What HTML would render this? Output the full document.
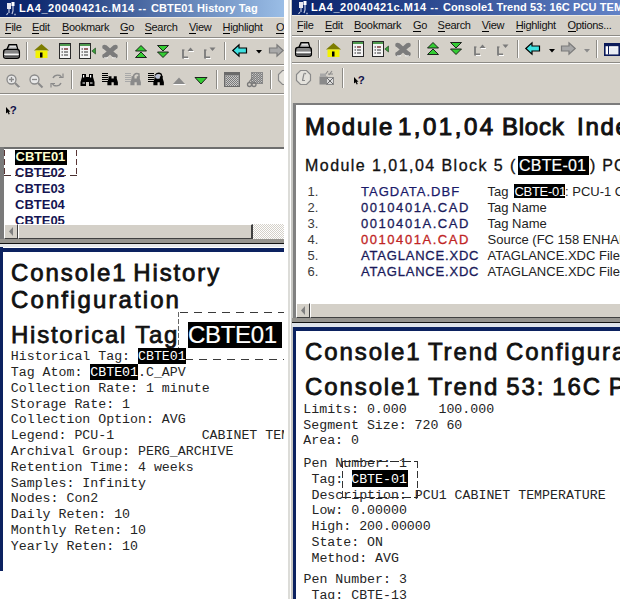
<!DOCTYPE html>
<html><head><meta charset="utf-8">
<style>
html,body{margin:0;padding:0;width:620px;height:605px;overflow:hidden;background:#fff;position:relative}
div,span,svg{position:absolute;box-sizing:border-box}
.s{font-family:"Liberation Sans",sans-serif}
.m{font-family:"Liberation Mono",monospace}
.g{background:#d4d0c8}
.tt{font-family:"Liberation Sans",sans-serif;font-size:11px;font-weight:bold;color:#fff;white-space:nowrap;line-height:12px}
.mn{font-family:"Liberation Sans",sans-serif;font-size:11px;color:#111;white-space:nowrap;line-height:12px;letter-spacing:-0.3px}
.mn u{text-decoration:none;border-bottom:1px solid #000}
.hl{background:#000;color:#fff}
.ml{font-family:"Liberation Mono",monospace;font-size:13.25px;color:#242424;white-space:pre;line-height:16px}
.lst{font-family:"Liberation Sans",sans-serif;font-size:13px;font-weight:bold;color:#141452;white-space:nowrap;line-height:16px}
.sub{font-family:"Liberation Sans",sans-serif;font-size:16px;line-height:18px;color:#111;white-space:nowrap;-webkit-text-stroke:0.3px #111}
.rw{font-family:"Liberation Sans",sans-serif;font-size:13px;line-height:15px;white-space:nowrap}
.h1{font-family:"Liberation Sans",sans-serif;font-size:24px;color:#111;white-space:nowrap;line-height:27px;-webkit-text-stroke:0.8px #111}
</style></head><body>
<svg style="left:0;top:0" width="0" height="0">
<defs>
<symbol id="prn" overflow="visible"><path d="M3.8 5.5 L6 0.7 H13.5 L14.8 5.5" fill="#9a9a9a" stroke="#000" stroke-width="1.3"/><path d="M6.8 2.4h6.2M6.2 4h7.6" stroke="#f4f4f4" stroke-width="0.9"/><path d="M3 5.4 H14 Q16.4 5.4 16.4 8 V12.3 Q16.4 14.4 14 14.4 H3 Q0.6 14.4 0.6 12.3 V8 Q0.6 5.4 3 5.4Z" fill="#858585" stroke="#000" stroke-width="1.3"/><path d="M1.2 10.3 H15.8" stroke="#f8f8f8" stroke-width="1.4"/><path d="M2 12.6 H15" stroke="#505050" stroke-width="1.2"/></symbol>
<symbol id="home" overflow="visible"><path d="M7.5 0 L15 6.5 H0 Z" fill="#7d7d00"/><rect x="1.5" y="6.5" width="12" height="7.5" fill="#f2f200"/><rect x="6" y="8.5" width="2.5" height="5" fill="#000"/></symbol>
<symbol id="cal" overflow="visible"><rect x="0.5" y="0.5" width="11" height="15" fill="#f4f4f4" stroke="#2a2a2a"/><rect x="1" y="1" width="10" height="2" fill="#4f9a4f"/><path d="M2.5 6h1.5M5 6h4M2.5 9h1.5M5 9h4M2.5 12h1.5M5 12h4" stroke="#333" stroke-width="1.2"/><path d="M5 6h4" stroke="#a04040" stroke-width="1"/></symbol>
<symbol id="calarr" overflow="visible"><use href="#cal"/><path d="M16.5 5 L12.8 8 L16.5 11Z" fill="#3aa03a" stroke="#1a401a" stroke-width="0.6"/></symbol>
<symbol id="xg" overflow="visible"><path d="M3 2 L13 11 M13 2 L3 11" stroke="#7c7c7c" stroke-width="4.5"/><circle cx="2.5" cy="2" r="2.3" fill="#7c7c7c"/><circle cx="13.5" cy="2" r="2.3" fill="#7c7c7c"/><circle cx="2.5" cy="11" r="2.3" fill="#7c7c7c"/><circle cx="13.5" cy="11" r="2.3" fill="#7c7c7c"/><path d="M2 12.8h4M10 12.8h4" stroke="#fff" stroke-width="0.8"/></symbol>
<symbol id="up2" overflow="visible"><path d="M6 0.5 L11.5 6 H0.5Z" fill="#33cc33" stroke="#111" stroke-width="0.9"/><path d="M6 7 L11.5 12.5 H0.5Z" fill="#33cc33" stroke="#111" stroke-width="0.9"/></symbol>
<symbol id="dn2" overflow="visible"><path d="M0.5 0.5 H11.5 L6 6Z" fill="#33cc33" stroke="#111" stroke-width="0.9"/><path d="M0.5 7 H11.5 L6 12.5Z" fill="#33cc33" stroke="#111" stroke-width="0.9"/></symbol>
<symbol id="lup" overflow="visible"><path d="M2 3 V10.5 H7" stroke="#7a7a7a" stroke-width="1.8" fill="none"/><path d="M1 3h2.5" stroke="#7a7a7a" stroke-width="1.2"/><path d="M6.5 4 L9.5 0.5 L12.5 4Z" fill="#7a7a7a"/><path d="M3 11.5h5M8 4.5h5" stroke="#fff" stroke-width="1"/></symbol>
<symbol id="ldn" overflow="visible"><path d="M2 3 V10.5 H7" stroke="#7a7a7a" stroke-width="1.8" fill="none"/><path d="M1 3h2.5" stroke="#7a7a7a" stroke-width="1.2"/><path d="M6.5 0.5 H12.5 L9.5 4Z" fill="#7a7a7a"/><path d="M3 11.5h5" stroke="#fff" stroke-width="1"/></symbol>
<symbol id="arrl" overflow="visible"><path d="M0.8 6.5 L7 0.8 V4 H14.5 V9 H7 V12.2Z" fill="#3fe0e0" stroke="#000" stroke-width="1.2"/></symbol>
<symbol id="arrr" overflow="visible"><path d="M14.2 6.5 L8 0.8 V4 H0.5 V9 H8 V12.2Z" fill="#a8a8a8" stroke="#7a7a7a" stroke-width="1.2"/></symbol>
<symbol id="dtri" overflow="visible"><path d="M0 0h6L3 3.5Z" fill="#000"/></symbol>
<symbol id="dtrig" overflow="visible"><path d="M0 0h6L3 3.5Z" fill="#8a8a8a"/></symbol>
<symbol id="zin" overflow="visible"><circle cx="5.5" cy="5.5" r="4.5" fill="#e8e8e8" stroke="#8a8a8a" stroke-width="1.3"/><path d="M3 5.5h5M5.5 3v5" stroke="#8a8a8a" stroke-width="1.3"/><path d="M9 9 L13.5 13.5" stroke="#8a8a8a" stroke-width="2"/><path d="M12.5 14 L14 14" stroke="#fff"/></symbol>
<symbol id="zout" overflow="visible"><circle cx="5.5" cy="5.5" r="4.5" fill="#e8e8e8" stroke="#8a8a8a" stroke-width="1.3"/><path d="M3 5.5h5" stroke="#8a8a8a" stroke-width="1.3"/><path d="M9 9 L13.5 13.5" stroke="#8a8a8a" stroke-width="2"/></symbol>
<symbol id="refr" overflow="visible"><path d="M2 4 Q4 0 9 1.5 L10.5 3" fill="none" stroke="#8a8a8a" stroke-width="1.4"/><path d="M8 3.5h4v-4" fill="none" stroke="#8a8a8a" stroke-width="1.2"/><path d="M10 9 Q8 13 3 11.5 L1.5 10" fill="none" stroke="#8a8a8a" stroke-width="1.4"/><path d="M4 9.5H0v4" fill="none" stroke="#8a8a8a" stroke-width="1.2"/></symbol>
<symbol id="bino" overflow="visible"><path d="M2 1h4v3h3V1h4v3l1.5 5v4H9V9H6v4H0.5V9L2 4z" fill="#000"/><path d="M2.5 10h2.5M10 10h2.5" stroke="#fff" stroke-width="1"/><rect x="3" y="2" width="1.2" height="2.5" fill="#fff"/><rect x="10" y="2" width="1.2" height="2.5" fill="#fff"/></symbol>
<symbol id="bino2" overflow="visible"><path d="M0 1.5h6M0 3.5h6M0 5.5h6M0 7.5h6M0 9.5h6" stroke="#000" stroke-width="1"/><g transform="translate(5,3.5) scale(0.75)"><path d="M2 1h4v3h3V1h4v3l1.5 5v4H9V9H6v4H0.5V9L2 4z" fill="#000"/></g></symbol>
<symbol id="bino3" overflow="visible"><path d="M0 1.5h6M0 3.5h6M0 5.5h6M0 7.5h6M0 9.5h6" stroke="#a8a8a8" stroke-width="1"/><g transform="translate(5,3.5) scale(0.75)"><path d="M2 1h4v3h3V1h4v3l1.5 5v4H9V9H6v4H0.5V9L2 4z" fill="#8a8a8a"/></g><path d="M8 5 Q10 0 14 2 L14 5.5" fill="none" stroke="#8a8a8a" stroke-width="1.4"/></symbol>
<symbol id="bino4" overflow="visible"><path d="M0 1.5h6M0 3.5h6M0 5.5h6M0 7.5h6M0 9.5h6" stroke="#000" stroke-width="1"/><g transform="translate(5,3.5) scale(0.75)"><path d="M2 1h4v3h3V1h4v3l1.5 5v4H9V9H6v4H0.5V9L2 4z" fill="#000"/></g><path d="M7 3.5 Q10 0 13 2 L14 5" fill="none" stroke="#000" stroke-width="1.4"/><circle cx="9.5" cy="4.5" r="2.3" fill="#b8c0d8"/></symbol>
<symbol id="trug" overflow="visible"><path d="M0 7 L6 0.5 L12 7Z" fill="#8a8a8a"/><path d="M0.5 7.5h12" stroke="#fff"/></symbol>
<symbol id="trdg" overflow="visible"><path d="M0 0.5 H12 L6 7Z" fill="#33cc33" stroke="#111" stroke-width="0.9"/></symbol>
<symbol id="grid" overflow="visible"><rect x="0.5" y="0.5" width="15" height="14" fill="#9a9a9a" stroke="#6a6a6a"/><rect x="1" y="1" width="14" height="2" fill="#6a6a6a"/><rect x="2" y="4" width="12" height="10" fill="url(#chk)"/></symbol>
<symbol id="gridp" overflow="visible"><rect x="4.5" y="0.5" width="11" height="11" fill="url(#chk)" stroke="#8a8a8a"/><path d="M7 1v10M10 1v10M13 1v10" stroke="#8a8a8a"/><circle cx="2.5" cy="12.5" r="2" fill="none" stroke="#7a7a7a" stroke-width="1.3"/><circle cx="7" cy="12.5" r="2" fill="none" stroke="#7a7a7a" stroke-width="1.3"/><path d="M2 10 L6 5" stroke="#7a7a7a" stroke-width="1.2"/></symbol>
<pattern id="chk" width="2" height="2" patternUnits="userSpaceOnUse"><rect width="2" height="2" fill="#c8c8c8"/><rect width="1" height="1" fill="#7a7a7a"/><rect x="1" y="1" width="1" height="1" fill="#7a7a7a"/></pattern>
<symbol id="khelp" overflow="visible"><path d="M2 4 V10.5 L3.5 9.2 L4.7 11.5 L5.8 10.9 L4.7 8.7 H6.5Z" fill="#000"/><text x="5.8" y="10.5" font-family="Liberation Sans" font-weight="bold" font-size="11.5" fill="#10104a">?</text></symbol>
<symbol id="clock" overflow="visible"><path d="M4.5 0.5h6l4 4v6l-4 4h-6l-4-4v-6z" fill="#e4e2dc" stroke="#8a8a8a" stroke-width="1.2"/><path d="M8 3.5 L6.5 10.5 M6 10.5h3 M8.5 3 L10 4" stroke="#8a8a8a" stroke-width="1.2" fill="none"/></symbol>
<symbol id="gift" overflow="visible"><rect x="0.5" y="6.5" width="8" height="8" fill="#8a8a8a"/><rect x="7.5" y="7.5" width="7" height="7" fill="#dcdcdc" stroke="#8a8a8a"/><path d="M8 8 L14 14 M14 8 L8 14" stroke="#6a6a6a"/><path d="M6 5 L9 1 M10 5 L13 1 M9 4h5" stroke="#8a8a8a" stroke-width="1.1"/><rect x="1" y="3.5" width="6" height="3" fill="#a8a8a8"/></symbol>
<symbol id="win" overflow="visible"><rect x="0.8" y="0.8" width="14.4" height="11.4" fill="#fff" stroke="#0a1a5a" stroke-width="1.6"/><rect x="1" y="1" width="14" height="2.2" fill="#0a1a5a"/><path d="M4.5 3v8.5" stroke="#0a1a5a" stroke-width="1"/><rect x="5.5" y="4.5" width="8.5" height="6.5" fill="#e8ecf4"/></symbol>
<symbol id="ticon" overflow="visible"><rect x="2" y="1" width="4" height="6" fill="#e8e8f0"/><rect x="6.5" y="0" width="3" height="4" fill="#fff"/><path d="M4 7v4 M3 11 L1.5 13 M8 4v5 L7 12" stroke="#c0c8e0" stroke-width="1.2" fill="none"/><path d="M9.5 12.5 h1" stroke="#fff" stroke-width="1.4"/></symbol>
</defs></svg>

<!-- ================= LEFT WINDOW ================= -->
<div id="L" style="left:0;top:0;width:284px;height:605px;overflow:hidden">
  <!-- title -->
  <div style="left:0;top:0;width:284px;height:17px;background:linear-gradient(to right,#0a246a 0px,#0c276e 30px,#a6caf0 305px)"></div>
  <div class="tt" style="left:19px;top:2px;letter-spacing:0.55px">LA4_20040421c.M14 --</div>
  <div class="tt" style="left:151px;top:2px;letter-spacing:0.1px">CBTE01 History Tag</div>
  <!-- menu -->
  <div class="g" style="left:0;top:17px;width:284px;height:130px"></div>
  <div style="left:0;top:17px;width:284px;height:1px;background:#ece9e2"></div>
  <div style="left:0;top:37px;width:284px;height:1px;background:#8c8a85"></div>
  <div style="left:0;top:38px;width:284px;height:1px;background:#fff"></div>
  <div style="left:0;top:64px;width:284px;height:1px;background:#8c8a85"></div>
  <div style="left:0;top:65px;width:284px;height:1px;background:#fff"></div>
  <div style="left:0;top:93px;width:284px;height:1px;background:#8c8a85"></div>
  <div style="left:0;top:94px;width:284px;height:1px;background:#fff"></div>
  <svg style="left:0;top:0" width="284" height="147"><use href="#ticon" x="5" y="2"/><use href="#prn" x="3" y="44"/><path d="M26.5 42V60" stroke="#8c8a85"/><path d="M27.5 42V60" stroke="#fff"/><use href="#home" x="34" y="44"/><use href="#cal" x="59" y="43"/><use href="#calarr" x="79" y="43"/><use href="#xg" x="102" y="45"/><path d="M126.5 42V60" stroke="#8c8a85"/><path d="M127.5 42V60" stroke="#fff"/><use href="#up2" x="135" y="45"/><use href="#dn2" x="157" y="45"/><use href="#lup" x="181" y="47"/><use href="#ldn" x="203" y="47"/><path d="M224.5 42V60" stroke="#8c8a85"/><path d="M225.5 42V60" stroke="#fff"/><use href="#arrl" x="232" y="44"/><use href="#dtri" x="256" y="50"/><use href="#arrr" x="269" y="44"/><use href="#zin" x="6" y="74"/><use href="#zout" x="29" y="74"/><use href="#refr" x="51" y="74"/><path d="M71.5 70V89" stroke="#8c8a85"/><path d="M72.5 70V89" stroke="#fff"/><use href="#bino" x="80" y="73"/><use href="#bino2" x="102" y="72"/><use href="#bino3" x="125" y="72"/><use href="#bino4" x="148" y="72"/><use href="#trug" x="173" y="77"/><use href="#trdg" x="195" y="77"/><path d="M216.5 70V89" stroke="#8c8a85"/><path d="M217.5 70V89" stroke="#fff"/><use href="#grid" x="224" y="72"/><use href="#gridp" x="247" y="72"/><path d="M270.5 70V89" stroke="#8c8a85"/><path d="M271.5 70V89" stroke="#fff"/><use href="#clock" x="278" y="70"/><use href="#khelp" x="4" y="103"/></svg>


  <div class="mn" style="left:5px;top:21px"><u>F</u>ile</div>
  <div class="mn" style="left:32px;top:21px"><u>E</u>dit</div>
  <div class="mn" style="left:62px;top:21px"><u>B</u>ookmark</div>
  <div class="mn" style="left:120px;top:21px"><u>G</u>o</div>
  <div class="mn" style="left:144.5px;top:21px"><u>S</u>earch</div>
  <div class="mn" style="left:189px;top:21px"><u>V</u>iew</div>
  <div class="mn" style="left:222.5px;top:21px"><u>H</u>ighlight</div>
  <div class="mn" style="left:276px;top:21px"><u>O</u>ptions...</div>

  <!-- list box -->
  <div style="left:0;top:147px;width:284px;height:2px;background:#6e6e6e"></div>
  <div style="left:0;top:147px;width:4px;height:92px;background:#7a7a7a"></div>
  <div style="left:4px;top:149px;width:280px;height:90px;background:#fff"></div>
  <!-- list content -->
  <div style="left:15px;top:150px;width:52px;height:15px;background:#000"></div><div class="lst" style="left:15px;top:149px;color:#ffffd0;padding-left:0.5px">CBTE01</div>
  <div class="lst" style="left:15px;top:165px">CBTE02</div>
  <div class="lst" style="left:15px;top:181px">CBTE03</div>
  <div class="lst" style="left:15px;top:197px">CBTE04</div>
  <div class="lst" style="left:15px;top:213px">CBTE05</div>
  <svg style="left:0;top:149px" width="90" height="30"><path d="M4.5 1V27" stroke="#5a3535" stroke-dasharray="6 3"/><path d="M76.5 1V27" stroke="#5a3535" stroke-dasharray="6 3"/><path d="M4 26.5H77" stroke="#4a3030" stroke-dasharray="7 4"/></svg>
  <!-- scrollbar -->
  <div class="g" style="left:4px;top:224px;width:280px;height:15px"></div>
  <div style="left:252px;top:224px;width:32px;height:15px;background:repeating-conic-gradient(#fff 0 25%,#d4d0c8 0 50%) 0 0/2px 2px"></div>
  <div style="left:4px;top:224px;width:14px;height:15px;border-top:1px solid #fff;border-left:1px solid #fff;border-right:1px solid #404040;border-bottom:1px solid #404040"></div>
  <div style="left:18px;top:224px;width:235px;height:15px;border-top:1px solid #fff;border-left:1px solid #fff;border-right:2px solid #404040;border-bottom:1px solid #404040"></div>
  <svg style="left:8px;top:227px" width="6" height="9"><path d="M5 0 L1 4.5 L5 9Z" fill="#808080"/></svg>
  <div style="left:0;top:239px;width:284px;height:4px;background:#96948f"></div>
  <div style="left:0;top:243px;width:284px;height:1px;background:#111"></div>
  <div style="left:0;top:244px;width:284px;height:3px;background:#e6e8ec"></div>
  <!-- content panel -->
  <div style="left:0;top:247.5px;width:284px;height:4.5px;background:#0c2260"></div>
  <div style="left:0;top:247px;width:3px;height:324px;background:#0c2260"></div>
  <!-- lower left content -->
  <div class="h1" style="left:11px;top:259px;letter-spacing:1.9px;word-spacing:-3px">Console1 History</div>
  <div class="h1" style="left:11px;top:286px;letter-spacing:2.1px">Configuration</div>
  <div class="h1" style="left:11px;top:321px;letter-spacing:1.75px;-webkit-text-stroke:0.75px #111">Historical Tag</div>
  <svg style="left:170px;top:305px" width="114" height="60"><path d="M10 7.5H114" stroke="#3a3a3a" stroke-dasharray="8 6"/><path d="M8.5 7V58" stroke="#666" stroke-dasharray="5 2"/><path d="M15 54.5H114" stroke="#3a3a3a" stroke-dasharray="8 6"/></svg>
  <div style="left:188px;top:322px;width:94px;height:26px;background:#000"></div>
  <div class="h1" style="left:188px;top:321px;color:#fff;letter-spacing:-0.3px;-webkit-text-stroke:0.2px #fff">CBTE01</div>
  <div style="left:138.0px;top:348.4px;width:47.7px;height:16px;background:#000"></div>
  <div class="ml" style="left:10.8px;top:349.0px">Historical Tag: </div>
  <div class="ml" style="left:138.0px;top:349.0px;color:#fff">CBTE01</div>
  <div style="left:90.3px;top:364.2px;width:47.7px;height:16px;background:#000"></div>
  <div class="ml" style="left:10.8px;top:364.8px">Tag Atom: CBTE01.C_APV</div>
  <div class="ml" style="left:90.3px;top:364.8px;color:#fff">CBTE01</div>
  <div class="ml" style="left:10.8px;top:380.6px">Collection Rate: 1 minute</div>
  <div class="ml" style="left:10.8px;top:396.5px">Storage Rate: 1</div>
  <div class="ml" style="left:10.8px;top:412.3px">Collection Option: AVG</div>
  <div class="ml" style="left:10.8px;top:428.1px">Legend: PCU-1           CABINET TEMPERATURE</div>
  <div class="ml" style="left:10.8px;top:443.9px">Archival Group: PERG_ARCHIVE</div>
  <div class="ml" style="left:10.8px;top:459.7px">Retention Time: 4 weeks</div>
  <div class="ml" style="left:10.8px;top:475.6px">Samples: Infinity</div>
  <div class="ml" style="left:10.8px;top:491.4px">Nodes: Con2</div>
  <div class="ml" style="left:10.8px;top:507.2px">Daily Reten: 10</div>
  <div class="ml" style="left:10.8px;top:523.0px">Monthly Reten: 10</div>
  <div class="ml" style="left:10.8px;top:538.8px">Yearly Reten: 10</div>
</div>

<!-- strip between windows -->
<div style="left:288px;top:0;width:2px;height:599px;background:#dcdcd8"></div>
<div style="left:291px;top:0;width:2px;height:599px;background:#c8c8c4"></div>

<!-- ================= RIGHT WINDOW ================= -->
<div id="R" style="left:292px;top:0;width:328px;height:599px;overflow:hidden">
  <div style="left:0;top:0;width:328px;height:15px;background:linear-gradient(to right,#0a246a 0px,#0e2a72 30px,#6282c6 328px)"></div>
  <div class="tt" style="left:19px;top:1px;letter-spacing:0.55px">LA4_20040421c.M14 --</div>
  <div class="tt" style="left:151px;top:1px;letter-spacing:0.1px">Console1 Trend 53: 16C PCU TEMPERATURE</div>
  <div class="g" style="left:0;top:15px;width:328px;height:88px"></div>
  <div style="left:0;top:15px;width:328px;height:1px;background:#ece9e2"></div>
  <div style="left:0;top:35px;width:328px;height:1px;background:#8c8a85"></div>
  <div style="left:0;top:36px;width:328px;height:1px;background:#fff"></div>
  <div class="mn" style="left:5px;top:19px"><u>F</u>ile</div>
  <div class="mn" style="left:33px;top:19px"><u>E</u>dit</div>
  <div class="mn" style="left:62px;top:19px"><u>B</u>ookmark</div>
  <div class="mn" style="left:121px;top:19px"><u>G</u>o</div>
  <div class="mn" style="left:145.6px;top:19px"><u>S</u>earch</div>
  <div class="mn" style="left:189.7px;top:19px"><u>V</u>iew</div>
  <div class="mn" style="left:223.7px;top:19px"><u>H</u>ighlight</div>
  <div class="mn" style="left:275.5px;top:19px"><u>O</u>ptions...</div>
  <div style="left:0;top:62px;width:328px;height:1px;background:#8c8a85"></div>
  <div style="left:0;top:63px;width:328px;height:1px;background:#fff"></div>
  <svg style="left:0;top:0" width="328" height="103"><use href="#ticon" x="5" y="1"/><use href="#prn" x="3" y="42"/><path d="M26.5 40V58" stroke="#8c8a85"/><path d="M27.5 40V58" stroke="#fff"/><use href="#home" x="34" y="43"/><use href="#cal" x="60" y="41"/><use href="#calarr" x="80" y="41"/><use href="#xg" x="103" y="43"/><path d="M126.5 40V58" stroke="#8c8a85"/><path d="M127.5 40V58" stroke="#fff"/><use href="#up2" x="135" y="42"/><use href="#dn2" x="158" y="42"/><use href="#lup" x="181" y="44"/><use href="#ldn" x="204" y="44"/><path d="M225.5 40V58" stroke="#8c8a85"/><path d="M226.5 40V58" stroke="#fff"/><use href="#arrl" x="233" y="42"/><use href="#dtri" x="257" y="49"/><use href="#arrr" x="269" y="42"/><use href="#dtrig" x="292" y="49"/><path d="M304.5 40V58" stroke="#8c8a85"/><path d="M305.5 40V58" stroke="#fff"/><use href="#win" x="312" y="43"/><use href="#clock" x="4" y="70"/><use href="#gift" x="27" y="70"/><path d="M50.5 68V88" stroke="#8c8a85"/><path d="M51.5 68V88" stroke="#fff"/><use href="#khelp" x="60" y="73"/></svg>

  <!-- list panel -->
  <div style="left:1px;top:103px;width:327px;height:2px;background:#7c7c7c"></div>
  <div style="left:1px;top:103px;width:3px;height:215px;background:#808080"></div>
  <div style="left:4px;top:105px;width:324px;height:198px;background:#fff"></div>
  <!-- list panel content -->
  <div class="h1" style="left:13px;top:113px;letter-spacing:1.75px;-webkit-text-stroke:1.0px #111">Module</div>
  <div class="h1" style="left:106px;top:113px;letter-spacing:2.5px;-webkit-text-stroke:1.0px #111">1,01,04</div>
  <div class="h1" style="left:210px;top:113px;letter-spacing:0.75px;-webkit-text-stroke:1.0px #111">Block</div>
  <div class="h1" style="left:285px;top:113px;letter-spacing:1.75px;-webkit-text-stroke:1.0px #111">Index</div>
  <div class="s" style="left:226.4px;top:156px;width:71px;height:19px;background:#000"></div>
  <div class="sub" style="left:13px;top:156.5px;letter-spacing:1.45px">Module 1,01,04 Block 5 (</div>
  <div class="sub" style="left:227px;top:156.5px;color:#fff;letter-spacing:0.2px;-webkit-text-stroke:0.2px #fff">CBTE-01</div>
  <div class="sub" style="left:298px;top:156.5px;letter-spacing:1.2px">) PCU-1</div>
  <div class="rw" style="left:15.5px;top:184.00px;color:#3a3a3a">1.</div>
  <div class="rw" style="left:69px;top:184.00px;color:#1a1a6a;letter-spacing:1.0px;-webkit-text-stroke:0.25px #1a1a6a">TAGDATA.DBF</div>
  <div class="rw" style="left:195.5px;top:184.00px;color:#222">Tag</div>
  <div style="left:222px;top:184.3px;width:51px;height:13.6px;background:#000"></div>
  <div class="rw" style="left:222.5px;top:184.00px;color:#fff;letter-spacing:-0.3px">CBTE-01</div>
  <div class="rw" style="left:273px;top:184.00px;color:#222">: PCU-1 CABINET TEMPERATURE</div>
  <div class="rw" style="left:15.5px;top:199.95px;color:#3a3a3a">2.</div>
  <div class="rw" style="left:69px;top:199.95px;color:#1a1a5a;letter-spacing:1.55px;-webkit-text-stroke:0.3px #1a1a5a">0010401A.CAD</div>
  <div class="rw" style="left:195.5px;top:199.95px;color:#222">Tag Name</div>
  <div class="rw" style="left:15.5px;top:215.90px;color:#3a3a3a">3.</div>
  <div class="rw" style="left:69px;top:215.90px;color:#1a1a5a;letter-spacing:1.55px;-webkit-text-stroke:0.3px #1a1a5a">0010401A.CAD</div>
  <div class="rw" style="left:195.5px;top:215.90px;color:#222">Tag Name</div>
  <div class="rw" style="left:15.5px;top:231.85px;color:#3a3a3a">4.</div>
  <div class="rw" style="left:69px;top:231.85px;color:#c02424;letter-spacing:1.55px;-webkit-text-stroke:0.3px #c02424">0010401A.CAD</div>
  <div class="rw" style="left:195.5px;top:231.85px;color:#222">Source (FC 158 ENHANCED</div>
  <div class="rw" style="left:15.5px;top:247.80px;color:#3a3a3a">5.</div>
  <div class="rw" style="left:69px;top:247.80px;color:#1a1a5a;letter-spacing:0.8px;-webkit-text-stroke:0.3px #1a1a5a">ATAGLANCE.XDC</div>
  <div class="rw" style="left:195.5px;top:247.80px;color:#222">ATAGLANCE.XDC File</div>
  <div class="rw" style="left:15.5px;top:263.75px;color:#3a3a3a">6.</div>
  <div class="rw" style="left:69px;top:263.75px;color:#1a1a5a;letter-spacing:0.8px;-webkit-text-stroke:0.3px #1a1a5a">ATAGLANCE.XDC</div>
  <div class="rw" style="left:195.5px;top:263.75px;color:#222">ATAGLANCE.XDC File</div>
  <div class="g" style="left:4px;top:303px;width:324px;height:15px"></div>
  <div style="left:4px;top:303px;width:14px;height:15px;border-top:1px solid #fff;border-left:1px solid #fff;border-right:1px solid #404040;border-bottom:1px solid #404040"></div>
  <div style="left:18px;top:303px;width:320px;height:15px;border-top:1px solid #fff;border-left:1px solid #fff;border-right:2px solid #404040;border-bottom:1px solid #404040"></div>
  <svg style="left:8px;top:306px" width="6" height="9"><path d="M5 0 L1 4.5 L5 9Z" fill="#808080"/></svg>
  <div style="left:0;top:318px;width:328px;height:4px;background:#96948f"></div>
  <div style="left:0;top:322px;width:328px;height:1px;background:#111"></div>
  <div style="left:0;top:323px;width:328px;height:4px;background:#dfe3ea"></div>
  <div style="left:1px;top:327px;width:327px;height:4px;background:#0c2260"></div>
  <div style="left:1px;top:327px;width:3px;height:272px;background:#0c2260"></div>
  <!-- trend panel content -->
  <div class="h1" style="left:13px;top:338px;letter-spacing:1.9px;word-spacing:-1.8px">Console1 Trend Configuration</div>
  <div class="h1" style="left:13px;top:373px;letter-spacing:1.9px;word-spacing:-1.7px">Console1 Trend 53: 16C PCU TEMPERATURE</div>
  <div class="ml" style="left:11.3px;top:401.6px">Limits: 0.000    100.000</div>
  <div class="ml" style="left:11.3px;top:417.5px">Segment Size: 720 60</div>
  <div class="ml" style="left:11.3px;top:433px">Area: 0</div>
  <div class="ml" style="left:11.5px;top:456px">Pen Number: 1</div>
  <div style="left:60px;top:470px;width:56px;height:17px;background:#000"></div>
  <div class="ml" style="left:11.5px;top:471.8px"> Tag: <span style="position:static;color:#fff">CBTE-01</span></div>
  <div class="ml" style="left:11.5px;top:487.8px"> Description: PCU1 CABINET TEMPERATURE</div>
  <div class="ml" style="left:11.5px;top:503.4px"> Low: 0.00000</div>
  <div class="ml" style="left:11.5px;top:519.1px"> High: 200.00000</div>
  <div class="ml" style="left:11.5px;top:534.9px"> State: ON</div>
  <div class="ml" style="left:11.5px;top:550.6px"> Method: AVG</div>
  <div class="ml" style="left:11.5px;top:572px">Pen Number: 3</div>
  <div class="ml" style="left:11.5px;top:587.6px"> Tag: CBTE-13</div>
  <svg style="left:45px;top:455px" width="90" height="45"><path d="M5 6.5H81" stroke="#2a2a2a" stroke-dasharray="9 3"/><path d="M5 42.5H81" stroke="#2a2a2a" stroke-dasharray="9 3"/><path d="M5.5 6V43" stroke="#333" stroke-dasharray="7 3"/><path d="M80.5 6V43" stroke="#333" stroke-dasharray="7 3"/></svg>
</div>

</body></html>
